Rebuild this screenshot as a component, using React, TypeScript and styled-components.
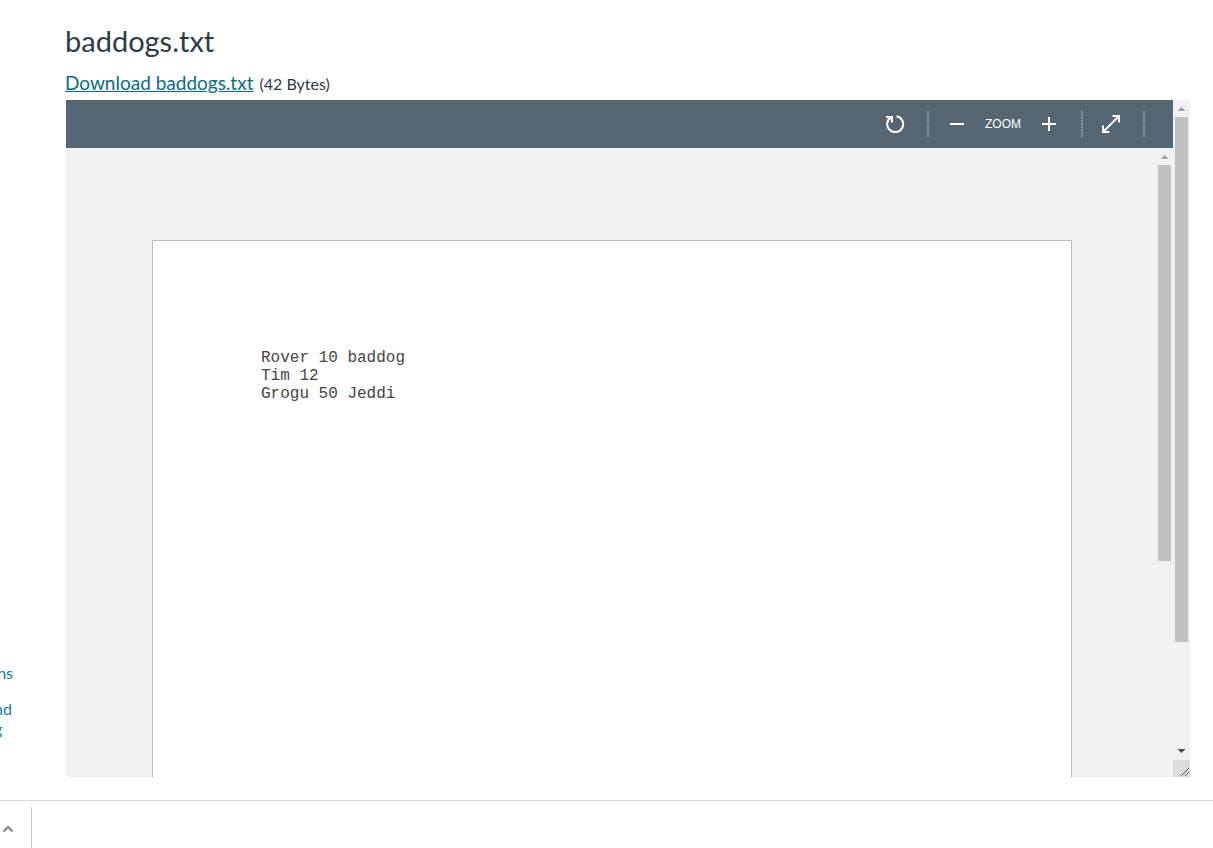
import React from "react";
import styled, { createGlobalStyle } from "styled-components";

const GlobalStyle = createGlobalStyle`
  *, *::before, *::after { box-sizing: border-box; }
  body {
    margin: 0;
    background: #fff;
    color: #2d3b45;
    font-family: Lato, "Liberation Sans", sans-serif;
    font-size: 16px;
  }
`;

const Screen = styled.div`
  display: flex;
  flex-direction: column;
  min-height: 100vh;
`;

const Content = styled.div`
  flex: 1;
  display: flex;
`;

const Rail = styled.nav`
  width: 65px;
  flex: none;
  display: flex;
  flex-direction: column;
  justify-content: flex-end;
  gap: 16px;
  padding-bottom: 61px;
  overflow: hidden;
`;

const RailLink = styled.a`
  display: block;
  color: #0b7f93;
  line-height: 20px;
  text-decoration: none;
`;

const RailLine = styled.span<{ $end: number }>`
  display: flex;
  justify-content: flex-end;
  width: ${(p) => p.$end}px;
`;

const Main = styled.main`
  flex: 1;
  min-width: 0;
  display: flex;
  flex-direction: column;
  padding: 23px 23px 23px 0;
`;

const Title = styled.h1`
  margin: 0;
  font-size: 29px;
  font-weight: 400;
  line-height: 36px;
`;

const FileInfo = styled.p`
  display: flex;
  align-items: baseline;
  gap: 6px;
  margin: 10px 0 2px;
  line-height: 28px;
`;

const DownloadLink = styled.a`
  color: #0b6b84;
  font-size: 19px;
  text-decoration: underline;
`;

const Viewer = styled.section`
  flex: 1;
  display: flex;
  margin-left: 1px;
  background: #f1f1f1;
`;

const Frame = styled.div`
  flex: 1;
  min-width: 0;
  display: flex;
  flex-direction: column;
`;

const Toolbar = styled.div`
  display: flex;
  align-items: center;
  justify-content: flex-end;
  height: 48px;
  padding-right: 28px;
  background: #556572;
  color: #fff;
`;

const ToolButton = styled.button`
  display: flex;
  align-items: center;
  justify-content: center;
  width: 32px;
  height: 32px;
  padding: 0;
  border: 0;
  background: none;
  color: inherit;
  cursor: pointer;
`;

const ToolGroup = styled.div`
  display: flex;
  align-items: center;
  padding: 0 16px 0 12px;
`;

const ZoomLabel = styled.span`
  width: 60px;
  text-align: center;
  font: 12px/16px "Liberation Sans", Arial, sans-serif;
`;

const Divider = styled.span`
  width: 2px;
  height: 26px;
  background: repeating-linear-gradient(#8c98a1 0 2px, transparent 2px 3px);
`;

const DocumentArea = styled.div`
  flex: 1;
  display: flex;
`;

const Canvas = styled.div`
  flex: 1;
  min-width: 0;
  display: flex;
  padding: 92px 84px 0 86px;
`;

const Sheet = styled.article`
  flex: 1;
  padding: 108px;
  border: 1px solid #b9bac1;
  border-bottom: 0;
  background: #fff;
`;

const FileText = styled.pre`
  margin: 0;
  color: #444;
  font: 16px/18px "Liberation Mono", "Courier New", monospace;
`;

const ScrollTrack = styled.div`
  width: 17px;
  flex: none;
  display: flex;
  flex-direction: column;
  align-items: center;
  background: #f1f1f1;
`;

const ScrollArrow = styled.svg`
  display: block;
  width: 17px;
  height: 17px;
  flex: none;
`;

const ScrollThumb = styled.div<{ $share: number }>`
  flex: ${(p) => p.$share} 0 0;
  width: 13px;
  background: #c1c1c1;
`;

const ScrollRest = styled.div<{ $share: number }>`
  flex: ${(p) => p.$share} 0 0;
`;

const ResizeCorner = styled(ScrollArrow)`
  background: #dcdcdc;
`;

const Shelf = styled.footer`
  display: flex;
  height: 48px;
  padding-top: 6px;
  border-top: 1px solid #d8d8d8;
`;

const ShelfButton = styled.button`
  display: flex;
  align-items: center;
  width: 32px;
  padding: 2px 0 0 2px;
  border: 0;
  border-right: 1px solid #cbcbcb;
  background: none;
  cursor: pointer;
`;

function UpArrow() {
  return (
    <ScrollArrow viewBox="0 0 17 17" shapeRendering="crispEdges" aria-hidden="true">
      <path d="M8 7h1v1h1v1h1v1h1v1H5v-1h1V9h1V8h1z" fill="#a3a3a3" />
    </ScrollArrow>
  );
}

function DownArrow() {
  return (
    <ScrollArrow viewBox="0 0 17 17" shapeRendering="crispEdges" aria-hidden="true">
      <path d="M5 6h7v1h-1v1h-1v1H9v1H8V9H7V8H6V7H5z" fill="#505050" />
    </ScrollArrow>
  );
}

export default function App() {
  return (
    <Screen>
      <GlobalStyle />
      <Content>
        <Rail aria-label="Course">
          <RailLink href="#ns">
            <RailLine $end={13}>ns</RailLine>
          </RailLink>
          <RailLink href="#nd">
            <RailLine $end={12}>nd</RailLine>
            <RailLine $end={2}>g</RailLine>
          </RailLink>
        </Rail>
        <Main>
          <Title>baddogs.txt</Title>
          <FileInfo>
            <DownloadLink href="#baddogs.txt">Download baddogs.txt</DownloadLink>
            <span>(42 Bytes)</span>
          </FileInfo>
          <Viewer>
            <Frame>
              <Toolbar>
                <ToolGroup>
                  <ToolButton aria-label="Rotate">
                    <svg width="20" height="20" viewBox="0 0 20 20" fill="none" stroke="currentColor" strokeWidth="2">
                      <path d="M11.500 2.200A8 8 0 1 1 6.500 3" />
                      <path d="M1 3h6v5.500" />
                    </svg>
                  </ToolButton>
                </ToolGroup>
                <Divider />
                <ToolGroup>
                  <ToolButton aria-label="Zoom out">
                    <svg width="14" height="14" viewBox="0 0 14 14" stroke="currentColor" strokeWidth="2">
                      <path d="M0 7h14" />
                    </svg>
                  </ToolButton>
                  <ZoomLabel>ZOOM</ZoomLabel>
                  <ToolButton aria-label="Zoom in">
                    <svg width="14" height="14" viewBox="0 0 14 14" stroke="currentColor" strokeWidth="2">
                      <path d="M0 7h14M7 0v14" />
                    </svg>
                  </ToolButton>
                </ToolGroup>
                <Divider />
                <ToolGroup>
                  <ToolButton aria-label="Fullscreen">
                    <svg width="18" height="18" viewBox="0 0 18 18" fill="none" stroke="currentColor" strokeWidth="2">
                      <path d="M10.500 1H17v6.500M1 10.500V17h6.500M17 1L1 17" />
                    </svg>
                  </ToolButton>
                </ToolGroup>
                <Divider />
              </Toolbar>
              <DocumentArea>
                <Canvas>
                  <Sheet>
                    <FileText>{"Rover 10 baddog\nTim 12\nGrogu 50 Jeddi"}</FileText>
                  </Sheet>
                </Canvas>
                <ScrollTrack>
                  <UpArrow />
                  <ScrollThumb $share={396} />
                  <ScrollRest $share={216} />
                </ScrollTrack>
              </DocumentArea>
            </Frame>
            <ScrollTrack>
              <UpArrow />
              <ScrollThumb $share={525} />
              <ScrollRest $share={101} />
              <DownArrow />
              <ResizeCorner viewBox="0 0 17 17" aria-hidden="true">
                <path d="M8 16l8-8M12 16l4-4" stroke="#505050" />
              </ResizeCorner>
            </ScrollTrack>
          </Viewer>
        </Main>
      </Content>
      <Shelf>
        <ShelfButton aria-label="Show downloads">
          <svg width="12" height="8" viewBox="0 0 12 8" fill="none" stroke="#808080" strokeWidth="2">
            <path d="M1.500 6.500L6 2l4.500 4.500" />
          </svg>
        </ShelfButton>
      </Shelf>
    </Screen>
  );
}
